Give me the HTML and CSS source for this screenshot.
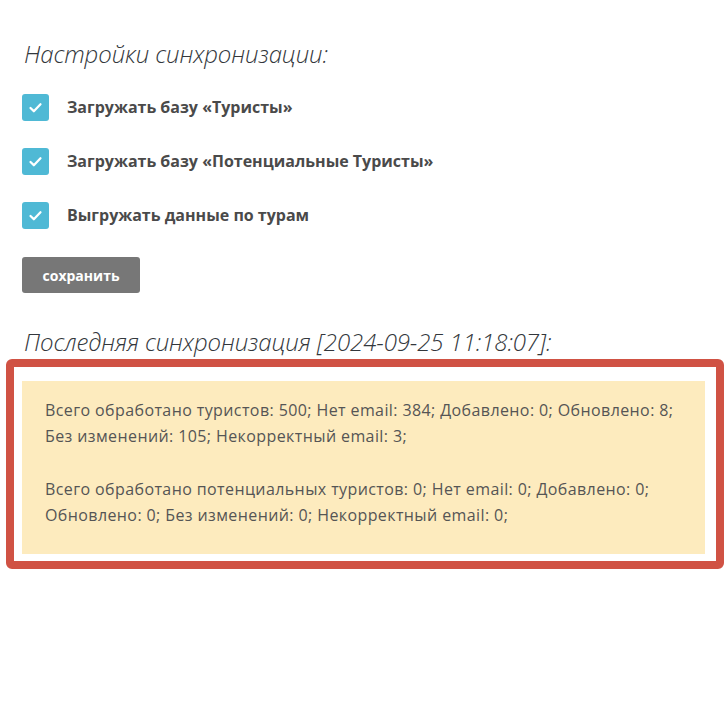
FILE: index.html
```html
<!DOCTYPE html>
<html lang="ru">
<head>
<meta charset="utf-8">
<link rel="stylesheet" href="styles.css">
</head>
<body>
<div class="page">
  <h2 class="title">Настройки синхронизации:</h2>
  <div class="options">
    <label class="opt"><span class="check"><svg viewBox="0 0 16 16" width="19" height="19"><path d="M3.8 8.4l2.8 2.7 5.6-5.8" fill="none" stroke="#fff" stroke-width="1.9" stroke-linecap="round" stroke-linejoin="round"/></svg></span>Загружать базу «Туристы»</label>
    <label class="opt"><span class="check"><svg viewBox="0 0 16 16" width="19" height="19"><path d="M3.8 8.4l2.8 2.7 5.6-5.8" fill="none" stroke="#fff" stroke-width="1.9" stroke-linecap="round" stroke-linejoin="round"/></svg></span>Загружать базу «Потенциальные Туристы»</label>
    <label class="opt"><span class="check"><svg viewBox="0 0 16 16" width="19" height="19"><path d="M3.8 8.4l2.8 2.7 5.6-5.8" fill="none" stroke="#fff" stroke-width="1.9" stroke-linecap="round" stroke-linejoin="round"/></svg></span>Выгружать данные по турам</label>
  </div>
  <button class="btn">сохранить</button>
  <h2 class="title title2">Последняя синхронизация [2024-09-25 11:18:07]:</h2>
  <div class="highlight">
    <div class="note">
      <p>Всего обработано туристов: 500; Нет email: 384; Добавлено: 0; Обновлено: 8; Без изменений: 105; Некорректный email: 3;</p>
      <p>Всего обработано потенциальных туристов: 0; Нет email: 0; Добавлено: 0; Обновлено: 0; Без изменений: 0; Некорректный email: 0;</p>
    </div>
  </div>
</div>
</body>
</html>
```

FILE: styles.css
```css
html, body {
  margin: 0;
  padding: 0;
  background: #fff;
}
body {
  font-family: "Open Sans", "Noto Sans", sans-serif;
  color: #4a4a4a;
}
.page {
  padding: 38px 4px 0 6px;
}
.title {
  margin: 0 0 0 18px;
  font-size: 24px;
  font-weight: 300;
  font-style: italic;
  color: #33373c;
  line-height: 32px;
  letter-spacing: -0.1px;
}
.options {
  display: flex;
  flex-direction: column;
  gap: 28px;
  margin: 24px 0 0 16px;
}
.opt {
  display: flex;
  align-items: center;
  gap: 18px;
  font-size: 16px;
  font-weight: 700;
  color: #4a4a4a;
  height: 26px;
}
.check {
  width: 27px;
  height: 27px;
  border-radius: 3px;
  background: #4fb9d5;
  display: flex;
  align-items: center;
  justify-content: center;
  flex: none;
}
.btn {
  margin: 29px 0 0 16px;
  width: 118px;
  height: 36px;
  border: none;
  border-radius: 3px;
  background: #777;
  color: #fff;
  font-family: "Open Sans", sans-serif;
  font-size: 14px;
  font-weight: 700;
  padding: 0;
}
.title2 {
  margin-top: 33px;
}
.highlight {
  margin-top: 1px;
  border: 8px solid #d05244;
  border-radius: 6px;
  padding: 14px 11px 7px 8px;
  box-sizing: border-box;
  width: 718px;
}
.note {
  background: #fdebbe;
  padding: 16px 20px 26px 23px;
  font-size: 16px;
  letter-spacing: 0.4px;
  line-height: 26px;
  color: #555;
}
.note p {
  margin: 0;
}
.note p + p {
  margin-top: 27px;
}
```
